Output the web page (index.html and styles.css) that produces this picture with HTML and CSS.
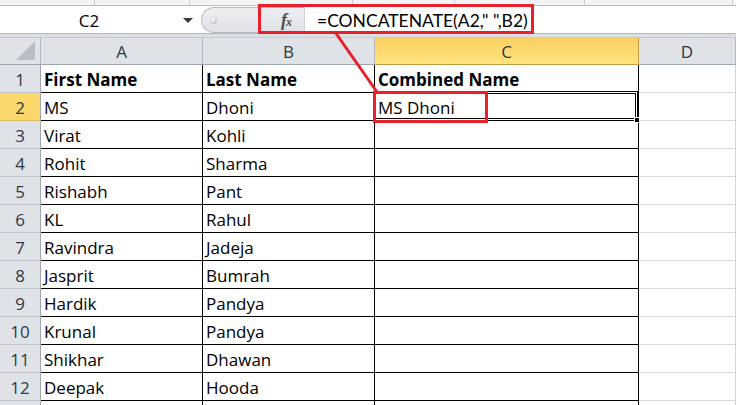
FILE: index.html
```html
<!DOCTYPE html>
<html lang="en">
<head>
    <meta charset="UTF-8">
    <title>CONCATENATE example</title>
    <link rel="stylesheet" href="styles.css">
</head>
<body>
    <div class="app">
        <!-- bottom edge of the ribbon -->
        <div class="ribbon-edge">
            <span class="seg w95"></span>
            <span class="seg w95"></span>
            <span class="seg w163"></span>
            <span class="seg w102"></span>
            <span class="seg w130"></span>
            <span class="seg w148"></span>
        </div>

        <!-- name box + formula bar -->
        <div class="formula-bar">
            <div class="name-box">
                <span class="cell-ref">C2</span>
                <span class="caret"></span>
            </div>
            <div class="fx-zone">
                <span class="knob"></span>
                <span class="fx"><i>f</i><span class="fx-x">x</span></span>
            </div>
            <div class="formula">=CONCATENATE(A2," ",B2)</div>
        </div>

        <div class="band"></div>

        <!-- worksheet -->
        <div class="sheet">
            <div class="corner"><span class="corner-tri"></span></div>
            <div class="col-head">A</div>
            <div class="col-head">B</div>
            <div class="col-head active">C</div>
            <div class="col-head">D</div>

            <div class="row-head">1</div>
            <div class="cell bold">First Name</div>
            <div class="cell bold">Last Name</div>
            <div class="cell bold">Combined Name</div>
            <div class="cell plain"></div>

            <div class="row-head active">2</div>
            <div class="cell">MS</div>
            <div class="cell">Dhoni</div>
            <div class="cell">MS Dhoni</div>
            <div class="cell plain"></div>

            <div class="row-head">3</div>
            <div class="cell">Virat</div>
            <div class="cell">Kohli</div>
            <div class="cell"></div>
            <div class="cell plain"></div>

            <div class="row-head">4</div>
            <div class="cell">Rohit</div>
            <div class="cell">Sharma</div>
            <div class="cell"></div>
            <div class="cell plain"></div>

            <div class="row-head">5</div>
            <div class="cell">Rishabh</div>
            <div class="cell">Pant</div>
            <div class="cell"></div>
            <div class="cell plain"></div>

            <div class="row-head">6</div>
            <div class="cell">KL</div>
            <div class="cell">Rahul</div>
            <div class="cell"></div>
            <div class="cell plain"></div>

            <div class="row-head">7</div>
            <div class="cell">Ravindra</div>
            <div class="cell">Jadeja</div>
            <div class="cell"></div>
            <div class="cell plain"></div>

            <div class="row-head">8</div>
            <div class="cell">Jasprit</div>
            <div class="cell">Bumrah</div>
            <div class="cell"></div>
            <div class="cell plain"></div>

            <div class="row-head">9</div>
            <div class="cell">Hardik</div>
            <div class="cell">Pandya</div>
            <div class="cell"></div>
            <div class="cell plain"></div>

            <div class="row-head">10</div>
            <div class="cell">Krunal</div>
            <div class="cell">Pandya</div>
            <div class="cell"></div>
            <div class="cell plain"></div>

            <div class="row-head">11</div>
            <div class="cell">Shikhar</div>
            <div class="cell">Dhawan</div>
            <div class="cell"></div>
            <div class="cell plain"></div>

            <div class="row-head">12</div>
            <div class="cell">Deepak</div>
            <div class="cell">Hooda</div>
            <div class="cell"></div>
            <div class="cell plain"></div>

            <div class="row-head"></div>
            <div class="cell"></div>
            <div class="cell"></div>
            <div class="cell"></div>
            <div class="cell plain"></div>
        </div>

        <!-- active cell outline and red call-outs -->
        <svg class="overlay" viewBox="0 0 736 405" width="736" height="405">
            <rect x="373.5" y="91.5" width="264" height="29" fill="none" stroke="#000"/>
            <rect x="374.5" y="92.5" width="262" height="27" fill="none" stroke="#fff"/>
            <rect x="375.5" y="93.5" width="260" height="25" fill="none" stroke="#000"/>
            <rect x="634.5" y="117.5" width="5" height="5" fill="#000" stroke="#fff"/>

            <rect x="259.5" y="5.5" width="273" height="27" fill="none" stroke="#e8202a" stroke-width="3"/>
            <line x1="335" y1="32" x2="377" y2="92" stroke="#e8202a" stroke-width="3"/>
            <rect x="374.5" y="92.5" width="112" height="29" fill="none" stroke="#e8202a" stroke-width="3"/>
        </svg>
    </div>
</body>
</html>
```

FILE: styles.css
```css
body {
    margin: 0;
    background: #fff;
    overflow: hidden;
}

.app {
    position: relative;
    width: 736px;
    height: 405px;
    overflow: hidden;
    font-family: "Open Sans", Lato, sans-serif;
    font-size: 17px;
    color: #000;
}

/* ribbon remnant */
.ribbon-edge {
    display: flex;
    height: 5px;
    background: #f3f4f6;
    border-bottom: 1px solid #b9bec5;
}

.seg {
    height: 100%;
    border-right: 1px solid #c9ccd1;
    box-sizing: border-box;
}

.w95 { width: 95px; }
.w163 { width: 163px; }
.w102 { width: 102px; }
.w130 { width: 130px; }
.w148 { width: 148px; }

/* formula bar */
.formula-bar {
    display: flex;
    height: 26px;
    border-bottom: 1px solid #b4b9bf;
    background: #fff;
    padding-top: 1px;
}

.name-box {
    width: 201px;
    display: flex;
    align-items: center;
}

.cell-ref {
    flex: 1;
    text-align: center;
    padding-right: 5px;
}

.caret {
    width: 0;
    height: 0;
    border-left: 5px solid transparent;
    border-right: 5px solid transparent;
    border-top: 5px solid #3a3a3a;
    margin-right: 8px;
}

.fx-zone {
    width: 104px;
    display: flex;
    align-items: center;
    background: linear-gradient(#eceef1, #dfe2e6);
    border: 1px solid #b7bcc3;
    border-right-color: #cfd3d8;
    border-radius: 13px 0 0 13px;
    box-sizing: border-box;
}

.knob {
    width: 7px;
    height: 7px;
    border-radius: 50%;
    background: radial-gradient(circle at 40% 35%, #ffffff, #a9adb3);
    margin-left: 8px;
}

.fx {
    margin-left: 64px;
    font-family: "Liberation Serif", serif;
    font-style: italic;
    font-weight: bold;
    font-size: 18px;
    color: #4f4f4f;
    letter-spacing: -1px;
}

.fx-x {
    font-size: 12px;
}

.formula {
    flex: 1;
    display: flex;
    align-items: center;
    padding-left: 12px;
    font-family: Lato, sans-serif;
    font-size: 17.5px;
}

.band {
    height: 3px;
    background: #dcdfe3;
}

/* worksheet grid */
.sheet {
    display: grid;
    grid-template-columns: 41px 162px 172px 264px 97px;
    grid-template-rows: 28px;
    grid-auto-rows: 28px;
}

.corner {
    background: #dfe3e8;
    border-right: 1px solid #b3b9c1;
    border-bottom: 1px solid #9ea6b0;
    border-top: 1px solid #c7ccd2;
    box-sizing: border-box;
    position: relative;
}

.corner-tri {
    position: absolute;
    right: 5px;
    bottom: 4px;
    width: 0;
    height: 0;
    border-left: 19px solid transparent;
    border-bottom: 19px solid #b9bec5;
}

.col-head {
    background: #dfe3e8;
    border-right: 1px solid #b3b9c1;
    border-bottom: 1px solid #9ea6b0;
    border-top: 1px solid #c7ccd2;
    box-sizing: border-box;
    display: flex;
    align-items: center;
    justify-content: center;
    color: #2e3846;
}

.col-head.active {
    background: linear-gradient(#fbcf63, #fee57d);
    border-right-color: #c89d45;
    border-bottom-color: #c89d45;
}

.row-head {
    background: #dfe3e8;
    border-right: 1px solid #9ea6b0;
    border-bottom: 1px solid #c2c7ce;
    box-sizing: border-box;
    display: flex;
    align-items: flex-end;
    justify-content: center;
    line-height: 22px;
    padding-bottom: 1px;
    color: #2e3846;
}

.row-head.active {
    background: #fbd86c;
    border-bottom-color: #d9b85e;
}

.cell {
    border-right: 1px solid #000;
    border-bottom: 1px solid #000;
    box-sizing: border-box;
    display: flex;
    align-items: flex-end;
    padding: 0 0 1px 3px;
    line-height: 22px;
    white-space: nowrap;
}

.cell.bold {
    font-weight: bold;
}

.cell.plain {
    border-right-color: #d4d4d4;
    border-bottom-color: #d9d9d9;
}

.overlay {
    position: absolute;
    top: 0;
    left: 0;
    pointer-events: none;
}
```
